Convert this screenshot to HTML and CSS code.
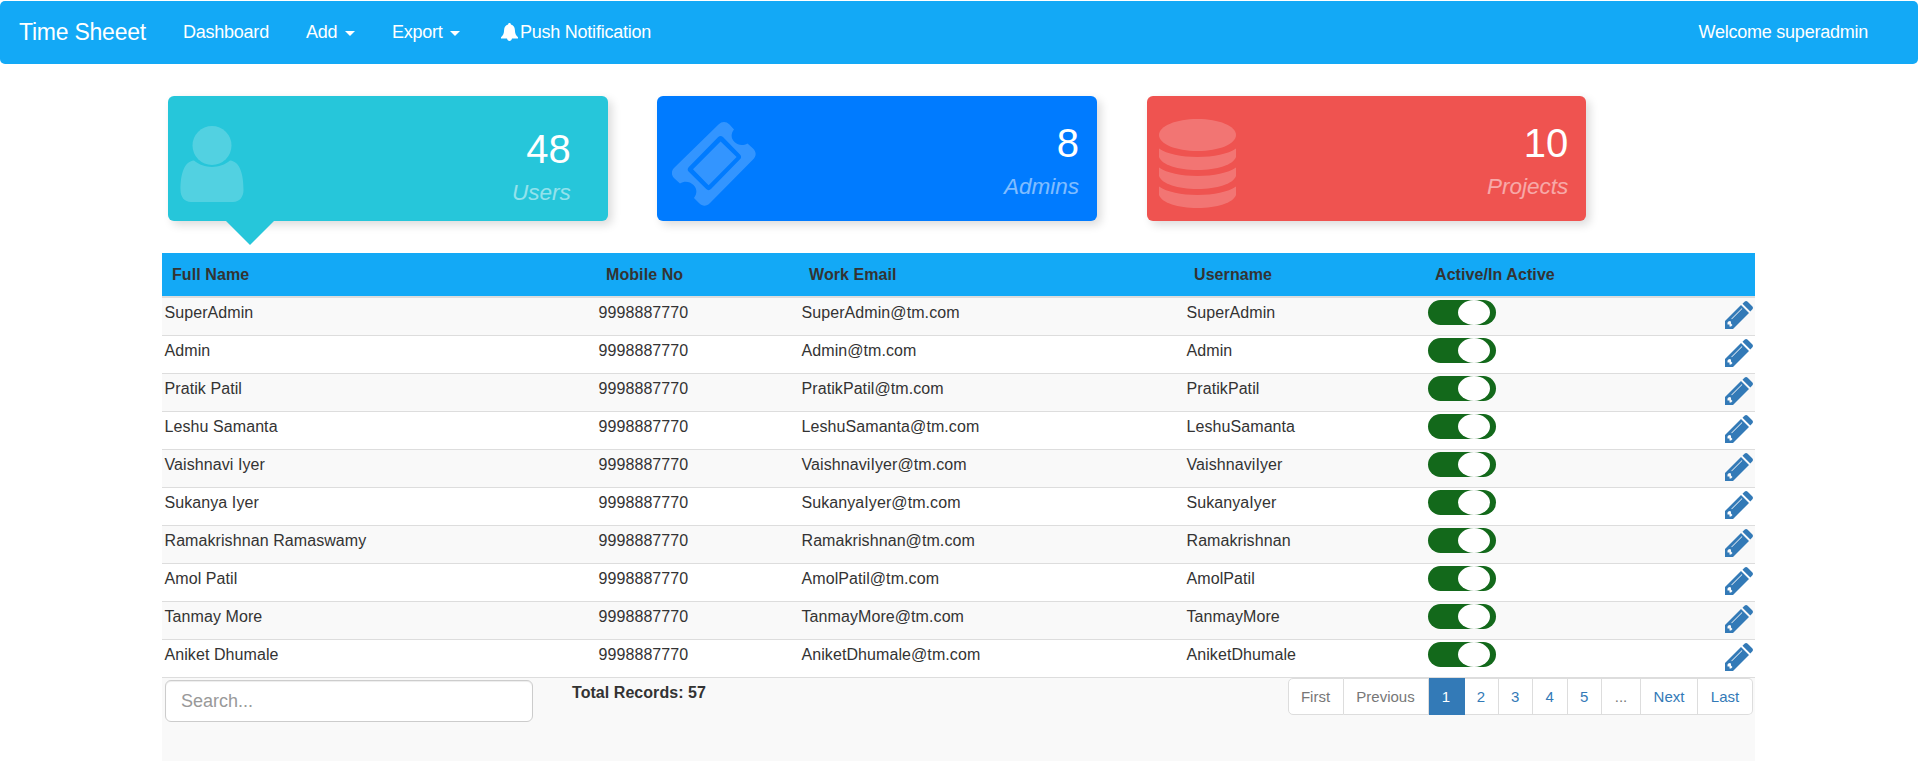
FILE: index.html
```html
<!DOCTYPE html>
<html lang="en">
<head>
<meta charset="utf-8">
<title>Time Sheeet</title>
<link rel="stylesheet" href="styles.css">
</head>
<body>
<nav class="navbar">
  <a class="brand">Time Sheeet</a>
  <a class="nav-dashboard">Dashboard</a>
  <a class="nav-add">Add <i class="caret"></i></a>
  <a class="nav-export">Export <i class="caret"></i></a>
  <a class="nav-push"><svg class="bell" viewBox="0 0 17 18"><path d="M8.500 0c.9 0 1.400.6 1.400 1.500 2.600.7 3.900 2.700 4 5.500.1 3.200.9 5.400 3.100 7.300V15.500H0v-1.200C2.200 12.400 3 10.200 3.100 7 3.200 4.200 4.500 2.200 7.100 1.500 7.100.6 7.600 0 8.500 0zM6 15.500h5c-.3 1.600-1.200 2.500-2.500 2.500S6.300 17.100 6 15.500z"/></svg>Push Notification</a>
  <a class="welcome">Welcome superadmin</a>
</nav>
<main class="container">
  <section class="cards">
    <div class="card users active">
      <svg class="icon" viewBox="0 0 64 76"><ellipse cx="32" cy="19.500" rx="19.500" ry="19.500"/><path d="M14 34.500c10 8.600 26 8.600 36 0C60 35.500 63.500 48 63.500 64c0 7-4 12-10.500 12H11C4.500 76 .5 71 .5 64 .5 48 4 35.500 14 34.500z"/></svg>
      <div class="figures"><span class="count">48</span><span class="label">Users</span></div>
    </div>
    <div class="card admins">
      <svg class="icon" viewBox="0 0 84 84"><path fill-rule="evenodd" d="M46.500 2.500c3.500-3.300 7.500-3.300 11 0L62 7.500c-3.500 4.500-3 9 .5 12.500s8.500 4 13 1.500l5.500 5c3.500 3.500 3.500 7.500 0 11L38 81c-3.500 3.500-7.500 3.500-11 0l-5-5c3.500-4.500 3-9.500-.5-13S12.500 58.500 8 61.500l-5.500-5c-3.500-3.500-3.500-7.500 0-11zM46.200 15c1.500-1.300 3.300-1.300 4.800 0l17 17.500c1.500 1.500 1.500 3.300 0 4.800L39 67c-1.500 1.500-3.300 1.500-4.800 0L16.800 49.800c-1.500-1.500-1.500-3.300 0-4.800zM48.600 19.500 21 47.300l15.600 15.900 28-28.200z"/></svg>
      <div class="figures"><span class="count">8</span><span class="label">Admins</span></div>
    </div>
    <div class="card projects">
      <svg class="icon" viewBox="0 0 77 89"><path d="M0 16C0 7 17 0 38.500 0S77 7 77 16C77 25 60 32 38.500 32S0 25 0 16z"/><path id="disk" d="M0 29.500C8 35 22 38 38.500 38S69 35 77 29.500V38C74 46 58 51 38.500 51S3 46 0 38z"/><use href="#disk" y="19"/><use href="#disk" y="38"/></svg>
      <div class="figures"><span class="count">10</span><span class="label">Projects</span></div>
    </div>
  </section>
  <table class="grid">
    <colgroup><col class="c-name"><col class="c-mobile"><col class="c-email"><col class="c-user"><col class="c-active"><col></colgroup>
    <thead><tr><th>Full Name</th><th>Mobile No</th><th>Work Email</th><th>Username</th><th>Active/In Active</th><th></th></tr></thead>
    <tbody id="rows"></tbody>
  </table>
  <footer class="footer">
    <input class="search" type="text" placeholder="Search...">
    <strong class="total">Total Records: 57</strong>
    <ul class="pager">
      <li class="w-first off">First</li><li class="w-prev off">Previous</li><li class="w-one current">1</li><li class="w-two">2</li><li class="w-num">3</li><li class="w-num">4</li><li class="w-num">5</li><li class="w-dots off">...</li><li class="w-next">Next</li><li class="w-last">Last</li>
    </ul>
  </footer>
</main>
<script src="app.js"></script>
</body>
</html>
```
FILE: styles.css
```css
* { box-sizing: border-box; }
body {
  margin: 0;
  padding-top: 1px;
  background: #fff;
  color: #333;
  font: 16px/22px "Liberation Sans", Arial, sans-serif;
  overflow: hidden;
}
.navbar {
  display: flex;
  align-items: flex-start;
  height: 63px;
  margin-right: 1px;
  padding: 19px 50px 0 19px;
  border-radius: 5px;
  background: #13a9f6;
  color: #fff;
  font-size: 18px;
  letter-spacing: -.24px;
  line-height: 24px;
  white-space: nowrap;
}
.brand { width: 164px; font-size: 23px; }
.nav-dashboard { width: 123px; }
.nav-add { width: 86px; }
.nav-export { width: 109px; }
.nav-push { display: flex; }
.bell { width: 17px; height: 18px; margin: 3px 2px 0 0; fill: #fff; }
.caret {
  display: inline-block;
  margin-left: 3px;
  vertical-align: 2px;
  border: 5px solid transparent;
  border-top-color: #fff;
  border-bottom: 0;
}
.welcome { margin-left: auto; }
.container { width: 1593px; margin-left: 162px; }
.cards { display: flex; gap: 49.6px; height: 189px; padding: 32px 0 0 6px; }
.card {
  position: relative;
  display: flex;
  justify-content: space-between;
  width: 439.7px;
  height: 125px;
  border-radius: 6px;
  box-shadow: 4px 4px 10px rgba(0, 0, 0, .14);
  color: #fff;
}
.users { background: #26c6da; padding: 30px 37px 0 12px; }
.admins { background: #007bff; padding: 24px 18px 0 15px; }
.projects { background: #ef5350; padding: 24px 18px 0 12px; }
.active::after {
  content: "";
  position: absolute;
  left: 58px;
  top: 125px;
  border: 24px solid transparent;
  border-top-color: #26c6da;
  border-bottom: 0;
}
.icon { fill: #fff; opacity: .2; }
.users .icon { width: 64px; height: 76px; }
.admins .icon { width: 84px; height: 84px; margin-top: 2px; }
.projects .icon { width: 77px; height: 89px; margin-top: -1px; }
.figures { display: flex; flex-direction: column; text-align: right; }
.count { font-size: 40px; line-height: 46px; }
.label { margin-top: 7px; font-size: 22.5px; line-height: 28px; font-style: italic; opacity: .5; }
.grid { width: 100%; table-layout: fixed; border-collapse: separate; border-spacing: 0; letter-spacing: .08px; }
.c-name { width: 434px; }
.c-mobile { width: 203px; }
.c-email { width: 385px; }
.c-user { width: 241px; }
.c-active { width: 242px; }
.grid th {
  height: 45px;
  padding: 0 10px;
  border-bottom: 2px solid #ddd;
  background: #13a9f6;
  text-align: left;
}
.grid td { height: 38px; padding: 3px 2.5px 0; border-bottom: 1px solid #ddd; vertical-align: top; line-height: 24px; }
.grid tbody tr:nth-child(odd) { background: #f9f9f9; }
.switch { display: flex; width: 68px; height: 25px; margin-top: -1px; padding: 0 6px 0 30px; border-radius: 13px; background: #13691b; }
.knob { flex: 1; border-radius: 50%; background: #fff; }
.pencil { display: block; width: 28px; height: 28px; margin-left: auto; fill: #337ab7; }
.footer { display: flex; align-items: flex-start; height: 83px; padding: 0 2px 0 3px; background: #f9f9f9; }
.search {
  width: 368px;
  height: 42px;
  margin: 2px 39px 0 0;
  padding: 0 15px;
  border: 1px solid #ccc;
  border-radius: 6px;
  box-shadow: inset 0 1px 1px rgba(0, 0, 0, .075);
  background: #fff;
  font: 18px/24px "Liberation Sans", Arial, sans-serif;
}
.search::placeholder { color: #999; opacity: 1; }
.total { margin-top: 4px; letter-spacing: .05px; }
.pager { display: flex; margin: 0 0 0 auto; padding: 0; list-style: none; font-size: 15px; line-height: 35px; text-align: center; color: #337ab7; }
.pager li { height: 37px; border: 1px solid #ddd; border-left-width: 0; background: #fff; }
.pager .off { color: #777; }
.pager .current { border-color: #337ab7; background: #337ab7; color: #fff; }
.pager .w-first { width: 56px; border-left-width: 1px; border-radius: 5px 0 0 5px; }
.w-prev { width: 85px; }
.w-one { width: 36px; }
.w-two { width: 34px; }
.w-num { width: 34.500px; }
.w-dots { width: 39px; }
.w-next { width: 57px; }
.pager .w-last { width: 55px; border-radius: 0 5px 5px 0; }
```
FILE: app.js
```js
const people = [
  ["SuperAdmin", "SuperAdmin"], ["Admin", "Admin"], ["Pratik Patil", "PratikPatil"],
  ["Leshu Samanta", "LeshuSamanta"], ["Vaishnavi Iyer", "VaishnaviIyer"],
  ["Sukanya Iyer", "SukanyaIyer"], ["Ramakrishnan Ramaswamy", "Ramakrishnan"],
  ["Amol Patil", "AmolPatil"], ["Tanmay More", "TanmayMore"], ["Aniket Dhumale", "AniketDhumale"]
];
const pencil = '<svg class="pencil" viewBox="0 0 28 28"><path fill-rule="evenodd" d="M0 28V20L16 4 24 12 8 28zM2.500 21.500V23.500H4.500V25.500H6L7.500 24 6 22.500V20.500L4 20zM6.800 18.300 17.300 7.800 16.800 7.300 6.300 17.800z"/><path d="M17.500 2.700 19.500.8c1-1 2.200-1 3.200 0l4.500 4.500c1 1 1 2.200 0 3.200L25.300 10.500z"/></svg>';
document.getElementById("rows").innerHTML = people.map(([name, user]) =>
  `<tr><td>${name}</td><td>9998887770</td><td>${user}@tm.com</td><td>${user}</td><td><span class="switch"><span class="knob"></span></span></td><td>${pencil}</td></tr>`
).join("");
```
